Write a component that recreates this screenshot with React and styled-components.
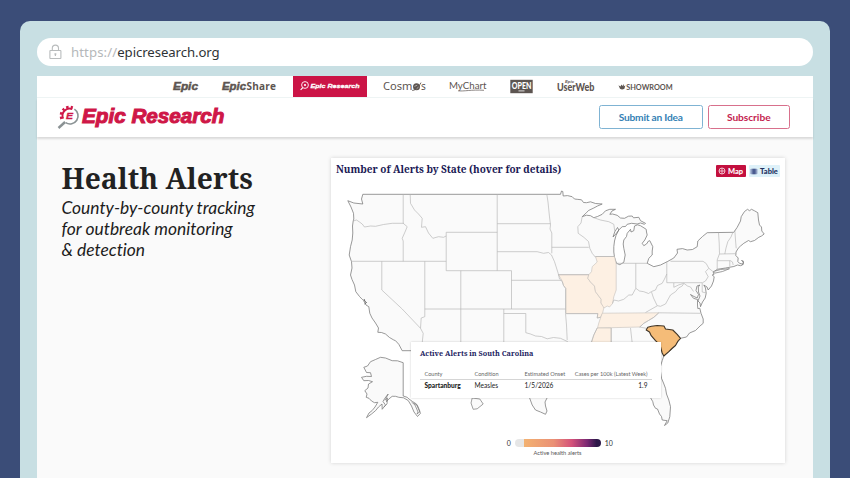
import React from 'react';
import styled, { createGlobalStyle } from 'styled-components';

const GlobalStyle = createGlobalStyle`
  * {
    box-sizing: border-box;
  }
  body {
    margin: 0;
    overflow: hidden;
    background: #3b4d78;
    font-family: Lato, sans-serif;
    font-variant-ligatures: none;
  }
`;

const Backdrop = styled.div`
  height: 478px;
  padding: 21px 20.5px 0 20px;
  background: #3b4d78;
`;

const BrowserWindow = styled.div`
  height: 457px;
  padding: 17px 16.5px 0 16.5px;
  background: #c8dfe3;
  border-radius: 10px 10px 0 0;
`;

const AddressBar = styled.div`
  display: flex;
  align-items: center;
  height: 27.5px;
  padding-left: 12px;
  margin-bottom: 10.5px;
  background: white;
  border-radius: 14px;
  svg {
    margin-right: 9.5px;
  }
`;

const Url = styled.div`
  font-family: 'Noto Sans', sans-serif;
  font-size: 13.2px;
  letter-spacing: ${({ spacing }) => spacing};
  color: ${({ color }) => color};
`;

const Page = styled.div`
  height: 402px;
  background: #fafafa;
`;

const SiteNav = styled.nav`
  display: flex;
  align-items: center;
  height: 21.5px;
  padding-left: 136px;
  background: white;
  border-bottom: 1px solid #eef4f4;
`;

const NavLogo = styled.a`
  display: flex;
  align-items: center;
  justify-content: center;
  height: 21px;
  width: ${({ width }) => width}px;
  margin-right: ${({ gap }) => gap}px;
  background: ${({ active }) => (active ? '#cb1446' : 'transparent')};
  svg {
    display: block;
    overflow: visible;
  }
`;

const Header = styled.header`
  display: flex;
  align-items: center;
  justify-content: space-between;
  height: 39px;
  padding: 0 23px 0 20px;
  background: white;
  box-shadow: 0 2px 2px rgba(0, 0, 0, 0.13);
`;

const Buttons = styled.div`
  display: flex;
  gap: 5px;
`;

const OutlineButton = styled.button`
  width: ${({ width }) => width}px;
  height: 24.5px;
  padding: 0;
  background: white;
  border: 1px solid ${({ border }) => border};
  border-radius: 2.5px;
  color: ${({ color }) => color};
  font-family: Lato, sans-serif;
  font-weight: 700;
  font-size: 10.2px;
  letter-spacing: ${({ spacing }) => spacing};
`;

const Content = styled.main`
  display: flex;
  justify-content: space-between;
  padding: 21.5px 28px 0 25px;
`;

const Intro = styled.div`
  padding-top: 2px;
`;

const Title = styled.h1`
  margin: 0;
  font-family: 'Noto Serif', 'DejaVu Serif', serif;
  font-weight: 700;
  font-size: 28.2px;
  line-height: 36px;
  letter-spacing: 0.07px;
  color: #222;
  white-space: nowrap;
`;

const Subtitle = styled.p`
  margin: 0.5px 0 0;
  font-style: italic;
  font-size: 17.4px;
  line-height: 21.3px;
  color: #1c1c1c;
  white-space: nowrap;
`;

const Card = styled.section`
  position: relative;
  width: 454.5px;
  height: 305px;
  background: white;
  box-shadow: 0 0 4px rgba(0, 0, 0, 0.16);
`;

const CardHeader = styled.div`
  display: flex;
  align-items: center;
  justify-content: space-between;
  height: 22px;
  padding: 0 5.5px 0 5.5px;
`;

const CardTitle = styled.h2`
  margin: 0;
  font-family: 'Noto Serif', 'DejaVu Serif', serif;
  font-weight: 700;
  font-size: 10px;
  letter-spacing: -0.02px;
  color: #1b1a55;
  white-space: nowrap;
`;

const Toggle = styled.div`
  display: flex;
  gap: 3px;
  padding-top: 4px;
`;

const ToggleItem = styled.div`
  display: flex;
  align-items: center;
  justify-content: center;
  gap: 2px;
  width: ${({ width }) => width}px;
  height: 12px;
  border-radius: 1px;
  background: ${({ active }) => (active ? '#c3103f' : '#def1f9')};
  color: ${({ active }) => (active ? 'white' : '#22305f')};
  font-size: 7.5px;
  font-weight: 900;
`;

const MapArea = styled.div`
  height: 259px;
  svg {
    display: block;
  }
`;

const Tooltip = styled.div`
  position: absolute;
  left: 80.5px;
  top: 184px;
  width: 250px;
  height: 56px;
  padding: 5.5px 9px 0;
  background: white;
  box-shadow: 0 0 2px rgba(0, 0, 0, 0.2);
`;

const TooltipTitle = styled.div`
  font-family: 'Noto Serif', 'DejaVu Serif', serif;
  font-weight: 700;
  font-size: 7.25px;
  line-height: 10px;
  color: #23235f;
`;

const TooltipRow = styled.div`
  display: grid;
  grid-template-columns: 50px 50px 50px 1fr;
  align-items: center;
  height: 11.5px;
  padding: 0 4.5px;
  font-size: ${({ $head }) => ($head ? '5.6px' : '6.6px')};
  color: ${({ $head }) => ($head ? '#666' : '#222')};
  margin-top: ${({ $head }) => ($head ? '10.5px' : '0')};
  border-bottom: ${({ $head }) => ($head ? '1px solid #d5d5d5' : 'none')};
  white-space: nowrap;
  span:first-child {
    font-weight: ${({ $head }) => ($head ? 400 : 900)};
  }
  span:last-child {
    text-align: right;
  }
`;

const Legend = styled.div`
  display: flex;
  flex-direction: column;
  align-items: center;
  width: 454px;
`;

const LegendScale = styled.div`
  display: flex;
  align-items: center;
  gap: 4px;
  height: 8px;
  padding-left: 4.5px;
  font-size: 7px;
  color: #333;
`;

const LegendBar = styled.div`
  width: 86px;
  height: 8px;
  border-radius: 4px;
  background: linear-gradient(
    90deg,
    #e6e6e6 0 9px,
    #f3b271 9px,
    #ea9075 45%,
    #d4517a 66%,
    #7b2873 84%,
    #2c1748 95%
  );
`;

const LegendLabel = styled.div`
  margin-top: 1.5px;
  font-size: 5.7px;
  color: #555;
`;

const LOGO_FONT = { fontFamily: 'Liberation Sans', fontWeight: 700, fontStyle: 'italic' };

const LockIcon = () => (
  <svg width="13" height="16" viewBox="0 0 13 16" fill="none" stroke="#b9bcbd" strokeWidth="1.1">
    <path d="M3.3 6.5V4.2a3.1 3.1 0 0 1 6.2 0v2.3" />
    <rect x="0.9" y="6.5" width="11" height="8" rx="0.6" />
    <path d="M6.4 9.3v2.8M5.3 10h2.2" strokeWidth="1.2" />
  </svg>
);

const BrandLogo = () => (
  <svg width="170" height="28" viewBox="56.5 103 170 28">
    <path d="M73.9 109.2A8 8 0 0 1 65.2 122.7" fill="none" stroke="#8a9294" strokeWidth="1.6" />
    <path d="M64.6 122L58 128" stroke="#8a9294" strokeWidth="2.4" />
    <path d="M62.7 118.6A7 7 0 0 1 71.8 109.2" fill="none" stroke="#cf1747" strokeWidth="1.9" />
    <path
      d="M61 119A8.7 8.7 0 0 1 72.3 107.6"
      fill="none"
      stroke="#cf1747"
      strokeWidth="2.4"
      strokeDasharray="2.4 2.1"
    />
    <text x="65.6" y="118.8" fontSize="8.6" textLength="7" lengthAdjust="spacingAndGlyphs" fill="#cf1747" stroke="#cf1747" strokeWidth="0.3" {...LOGO_FONT}>
      E
    </text>
    <text
      x="81.5"
      y="123.4"
      fontSize="19.5"
      textLength="142.5"
      lengthAdjust="spacingAndGlyphs"
      fill="#cf1747"
      stroke="#cf1747"
      strokeWidth="1"
      {...LOGO_FONT}
    >
      Epic Research
    </text>
  </svg>
);

const EpicLogo = () => (
  <svg width="25" height="14">
    <text x="0" y="10.5" fontSize="10" textLength="25" lengthAdjust="spacingAndGlyphs" fill="#5d5551" stroke="#5d5551" strokeWidth="0.45" {...LOGO_FONT}>Epic</text>
  </svg>
);

const EpicShareLogo = () => (
  <svg width="54" height="14">
    <text x="0" y="10.5" fontSize="10" textLength="24" lengthAdjust="spacingAndGlyphs" fill="#5d5551" stroke="#5d5551" strokeWidth="0.45" {...LOGO_FONT}>Epic</text>
    <text x="24.5" y="10.8" fontSize="10" textLength="29.5" fontFamily="Open Sans" fontWeight="700" fill="#5d5551">Share</text>
  </svg>
);

const ResearchLogo = () => (
  <svg width="60" height="14">
    <circle cx="5" cy="6" r="3.4" fill="none" stroke="white" strokeWidth="0.9" />
    <circle cx="5" cy="6" r="1.1" fill="white" />
    <path d="M2.8 8.6L0.6 10.8" stroke="white" strokeWidth="1.2" />
    <text x="10.5" y="9" fontSize="6.2" textLength="49" lengthAdjust="spacingAndGlyphs" fill="white" stroke="white" strokeWidth="0.3" {...LOGO_FONT}>Epic Research</text>
  </svg>
);

const CosmosLogo = () => (
  <svg width="43" height="14">
    <text x="0" y="10.8" fontSize="11.2" textLength="29.5" lengthAdjust="spacingAndGlyphs" fontFamily="Noto Sans" fill="#5d5551">Cosm</text>
    <circle cx="33.5" cy="7.8" r="3.5" fill="#5d5551" />
    <path d="M29.2 11.4c2.5.2 6.2-2.6 8.8-7.8" fill="none" stroke="#5d5551" strokeWidth="0.9" />
    <path d="M31.4 7.4l2.8-1.2M33.6 9.8l2-1.8" stroke="white" strokeWidth="0.5" />
    <text x="38" y="10.8" fontSize="11.2" textLength="4.8" lengthAdjust="spacingAndGlyphs" fontFamily="Noto Sans" fill="#5d5551">s</text>
  </svg>
);

const MyChartLogo = () => (
  <svg width="38" height="14">
    <text x="0" y="9.8" fontSize="10" textLength="37.5" lengthAdjust="spacingAndGlyphs" fontFamily="Lato" fill="#5d5551">MyChart</text>
    <path d="M9 11.8c6 0.8 13-1.4 26-0.5" fill="none" stroke="#5d5551" strokeWidth="0.7" />
  </svg>
);

const OpenLogo = () => (
  <svg width="23" height="14">
    <rect x="0.3" y="0.8" width="22.4" height="13.4" fill="#5d5551" />
    <text x="1.8" y="9.6" fontSize="9.4" textLength="19.6" lengthAdjust="spacingAndGlyphs" fontFamily="Lato" fontWeight="900" fill="white">OPEN</text>
    <path d="M8.5 11.9h6" stroke="#ddd" strokeWidth="1" />
  </svg>
);

const UserWebLogo = () => (
  <svg width="38" height="14">
    <text x="8" y="4" fontSize="4" textLength="9" lengthAdjust="spacingAndGlyphs" fill="#5d5551" {...LOGO_FONT}>Epic</text>
    <text x="0" y="12.4" fontSize="10.4" textLength="37.5" lengthAdjust="spacingAndGlyphs" fontFamily="Lato" fontWeight="900" fill="#5d5551">UserWeb</text>
  </svg>
);

const ShowroomLogo = () => (
  <svg width="55" height="14">
    <path d="M0.5 6.2l2 1.4 0.9-2.2 1 1.6 1.4-2v2.4l1.6-1.2-1 3.6q-2.4 1.6-4.4 0z" fill="#5d5551" />
    <text x="8.2" y="10.7" fontSize="7" textLength="46.5" lengthAdjust="spacingAndGlyphs" fontFamily="Lato" fontWeight="700" fill="#5d5551">SHOWROOM</text>
  </svg>
);

const GlobeIcon = () => (
  <svg width="8" height="8" viewBox="0 0 8 8" fill="none" stroke="#f8dfe6" strokeWidth="0.8">
    <circle cx="4" cy="4" r="3" />
    <path d="M1 4h6M4 1v6" />
  </svg>
);

const TableIcon = () => (
  <svg width="8" height="7" viewBox="0 0 8 7">
    <rect x="0.4" y="0.8" width="7" height="5.4" rx="0.8" fill="#8c9cc0" />
    <rect x="2.4" y="0.8" width="3.2" height="5.4" fill="#4a5b90" />
  </svg>
);

const COAST =
  'M362.3 194.3H560L561 191L562.3 191.5L562.7 196L567 195.6L571.7 196.7L574 199L576.7 199.3L581 199.8L583 202.5L586 202.7L590 201.8L595 203.5L601.7 204L597 206L593.3 208L588 210.5L586 212.7L581.7 216.7L586 215.2L590 215.7L593.3 217.7L597 216.5L601.7 214.3L605 210.8L609.3 209.3L615 209.3L611.5 211L609.3 214.3L612 214L616.7 215.3L620 218L624 218.3L628 216.2L631.7 216L633 217.8L638.3 217.3L640 220.7L645 223.3L644 224.3L640 223L636.7 224L631 223.3L626.7 224.3L625 226.5L621.7 226.7L618.3 230L617 227.5L614.3 231.7L612.5 237L615.3 234L618.3 230L615.5 235.5L614 241L613.3 246.7L613.3 252L614 257.3L616 263.3L619.3 264.7L623.3 262.3L624.7 255L623.3 248.3L622.7 244L623.3 240L626 236.5L626.7 233.3L630 229.3L630.5 232L633.3 230.7L634 226L637 224.8L640 225.7L645.7 229.3L646 232L646.7 235L644.3 240L641.7 243.3L643.3 245.7L646 244L648 241L649.3 240.7L652.3 246.7L651.7 251L651.7 255L648.3 258.3L646.7 263.3L653.3 266.7L660 265L666.7 261.7L673.3 258L677 253L676.5 249.3L682 248.6L686.7 250L692 249.5L696.7 246.7L697.3 241L702 236.5L706.7 232.7L733.3 232.3L736.7 227.3L740 221L740.7 216.7L744 211.5L747 209.3L749 210.7L751 209.3L754 210.8L757.3 212.7L758 220L759 225L761 227L761.3 231L763.7 234L761 236L758.3 237.3L754 240.5L750 241.7L748 240.5L743.3 243.3L740 246L737.7 248.3L735.5 252L735.3 255.5L737.7 258L737.3 261.5L739 263.3L742.7 264.3L742.8 261L741 260.5L743 262.2L742 265L740 265.7L737 265L733.3 266.5L725 268L716.7 269.3L712.7 272.3L713.5 274.5L711.7 275L713.7 276.7L713 281L711 286L707.7 290L706.5 287L703.3 285L705 288L705.7 293.3L704.7 298L702 302L700 306.7L699.5 303L697.5 301L699.5 296L698 292L697.8 287L699.3 285L696.5 286L695.5 290.5L698 294.5L696.7 298L693.5 296.5L690 294.5L693 298.3L697 299.5L697 305L697.3 308.5L699.3 308.3L700.5 313.3L702.7 319L702.7 323.3L699.5 326L695 330.5L689 333L686 337L680 338.3L675 345L668.3 351.7L663.3 356L661.7 360.7L659.5 368L661 378.3L663 383L665 388.3L666 394L668.3 400L670 406.7L669.3 416.7L667.3 423L664 425.5L666.7 420.7L661.7 420L661 416.5L659 414L657 409L655 408.3L653 405L652.3 401.7L650 397.7L640 385L610 388L580 390L552 394L546.7 397.7L544.5 402L545 406L546.5 411L545 414.3L540 412L535 410L531.7 405L529 397.7L515 382L505 385L490 370L460 362L424 355L411 350.7H401.7L398.3 344.3L395 340.7L393.3 340L389 337.5L385 334L381 332.5L377.3 332.3L378 328L375 323L371.5 318L369.3 313.3L368.3 306.7L365.5 305L363 300.5L361.7 299.3L359 296.5L355.3 291.7L354 285L351.5 279.5L350 275L351.5 268L351 261.7L348.7 255L349.5 250L350 246.7L351.7 240L352.3 233L352 226L352.7 221L353.3 219L353 213.3L350.5 207L347.3 200.7L353.3 203L362.3 204L361 199Z';

const ALASKA =
  'M380 357.3L385 358L391.7 360.7L397 360.8L402.7 362.7V396L406.7 397.3L408.5 399L412 401.5L416 404L418 409L420 413.3L417 416.5L413.5 412L411 406L407.7 400.5L403 397.8L398.3 397.3L395 396.3L391.7 396.3L388.3 399L386 401.7L385.5 398L387.7 394L384.3 398.3L382.5 401.5L385 405L381.7 409.3L381.5 404L378 407L375 410.7L371 414L366 417.7L368.5 413L371.7 410.5L374.5 407L377.3 402.3L374 402.7L371 401L368.5 398.3L365.7 397.3L366.5 394L364.3 390.7L367.5 388L368 384L372 381.7L368 380.5L363.3 380.7L361 377.3L366 376.3L371 376.5L370 372.7L366 372.5L363.3 367.3L367 366L370 361.7L375 359.5Z';

const STATE_LINES = [
  // west
  'M352.7 221L356 220L359 222L361.7 224L364 227L370 226L375 226.3L383 224.5L391.7 223.3H403.3',
  'M402.7 194.3V223.3L406.7 226.7L404.5 232L401.7 238.3L402.7 241V261.3',
  'M351 261.3H445.7',
  'M409.7 194.3L410 203.3L414 210L418 214L421.7 218.3L421 227.3L425 226.7L428 233L432.3 238.3L438 236.7L443 237.3L445.7 236',
  'M496.7 194.3V270.7M445.7 232.3H496.7M445.7 232.3V270.7H511V309M460.3 270.7V343M424.3 309H565',
  'M381.3 261.3V290L401.7 309L420 328.3L422.7 333.3L421.7 343M424.3 261.3V316.7L420.7 318L420 328.3',
  // plains
  'M496.7 223.7H550M546.3 194.3L547.5 202L548.3 210L549 217L550 225L549.5 229L551.3 233V253.3',
  'M496.7 251.7H536.7L543 253.3L548 252.5L551 255L554 261.7L556 268L557.7 273.3L559 279L561.7 281.5L563 285.5L565 288.3V313.3L566 325L566.7 340',
  'M511 280.3H561M551.3 247.3H588.3M557.7 274.7H588.3',
  'M503.3 309V343M503.3 313.5H525.3V332.7L530 334L535 336L541 336.5L546.7 338.8L553 337.5L560 338.3L567.3 341.7',
  // upper midwest
  'M581.7 216.7L580.5 223L577.3 226.7L577.7 233.3L583.3 237.3L588 241.5L589.3 248.3L591.7 253.3L595 257.3',
  'M593.3 217.7L600 220L608.3 221.7L613.3 224.3L614.3 231.7M595 256.5H614M615.7 263.3H647M635.3 263.3V288.3',
  'M612 303.5L613.3 300L618 301L623.3 299.3L628.3 295L631.7 295L635.3 288.3L639 291L643.3 291.7L648 293.5L651 291.5L655 290L657 285.5L661.7 283.3L664 279L666.3 274V261.7',
  'M565.7 313.6H597.3L596.7 318L600 317.3',
  // south
  'M658.3 312.8L699.7 313.3M610.7 328V343M630 328L631.7 343M590.7 343L593.3 335L596.7 328M639 327L647 328.5',
  'M658.3 312.8L653.3 317.3L648 320.5L643.3 323.3L639.3 327M645 312.5L657 305.7L660 306.3L665 304L670 295L675 291.7L678 288L681.7 286L683.3 283.5',
  'M651 292L653 298L656.7 305.7',
  // northeast
  'M670 261.3H702.5L705.7 263.5L708.3 268.3L705 271.7L707.7 276.7L705 281L702 282.7M666.3 274V282.7H701.7V292L705.7 293',
  'M708.3 268.3L712.7 271.7M673.3 283V287.3L678 285L683.3 283.3L687 286L690 287L693 291.5',
  'M718 232.7L718.7 243L719 253.7L716.7 260L716.7 269M732.3 232.5L730.5 237L727.3 241.7L725.5 248L724.3 254M734.3 230L735 240L735.7 248.3',
  'M719 254L735 253.7M717 260.7H730L732 262L732.7 265M729.3 260.7V266.5',
];

const PALE_STATES = [
  // Missouri
  'M558 274.7H588.3L587.3 278.3L590 282L594 286L595 291.7L600.7 299.3L600.5 303L603.5 307L602 313.5L600 317.3L596.7 318L597.3 313.6H565.5V288.5L563 285.5L561.7 281Z',
  // Illinois
  'M595 256.5H614L615.7 264V290L613.3 296.7L612 303.5L609 307L606.7 306L603.5 308L600.5 303L600.7 299.3L595 291.7L594 286L590 282L587.3 278.3L588.3 274.7L591 271.7L591.7 266.7L596.7 262Z',
  // Tennessee
  'M601.7 313.2L658.3 312.8L653.3 317.3L648 320.5L643.3 323.3L639.3 327L597 328L598.3 323L600 318Z',
  // Mississippi
  'M596.7 328H610.7V343H590.7L593.3 335Z',
];

const UsMap = () => (
  <svg width="454" height="256" viewBox="330.5 180 454 256" strokeLinejoin="round">
    <path d={COAST} fill="#fafafa" stroke="#777" strokeWidth="0.75" />
    <path d={ALASKA} fill="#fafafa" stroke="#777" strokeWidth="0.75" />
    <path d="M411 402L414.5 405L417.5 412L416.5 414L419.5 411.5L417 405.5L413 403M384 400L387 398L386.5 404L383.5 407" fill="none" stroke="#777" strokeWidth="0.7" />
    <path d="M471.7 398L470.5 403L472.7 409.3L476.7 408.8L482.7 404L479.3 399Z" fill="#fafafa" stroke="#777" strokeWidth="0.7" />
    <path d="M713 271.5L720 269.5L729 268.7L722 271.5L714 273.2Z" fill="#fafafa" stroke="#777" strokeWidth="0.7" />
    <path d="M363.5 299L364.5 301.5L366 302.5L364 304" fill="none" stroke="#555" strokeWidth="0.9" />
    {PALE_STATES.map((d) => (
      <path key={d} d={d} fill="#fdf0e3" stroke="#c4c0bb" strokeWidth="0.6" />
    ))}
    {STATE_LINES.map((d) => (
      <path key={d} d={d} fill="none" stroke="#b4b4b4" strokeWidth="0.65" />
    ))}
    <path
      d="M645.7 330L647.3 327.3L651 326.3L656.7 325.5L663.5 326L665 329L672.3 330L676.7 334.3L680 338.3L677.5 341L675 345.5L671.5 348.5L668.3 351.7L663.3 356L661.7 353L659.5 345L655 340.7L650.7 335.7L649 332Z"
      fill="#f5bc78"
      stroke="#3f3528"
      strokeWidth="1.1"
    />
  </svg>
);

const App = () => {
  return (
    <Backdrop>
      <GlobalStyle />
      <BrowserWindow>
        <AddressBar>
          <LockIcon />
          <Url color="#b5b8ba" spacing="0.1px">https://</Url>
          <Url color="#2f3336" spacing="-0.08px">epicresearch.org</Url>
        </AddressBar>
        <Page>
          <SiteNav>
            <NavLogo width={26} gap={23.5}><EpicLogo /></NavLogo>
            <NavLogo width={54} gap={16.5}><EpicShareLogo /></NavLogo>
            <NavLogo width={74} gap={16.5} active><ResearchLogo /></NavLogo>
            <NavLogo width={43} gap={22.5}><CosmosLogo /></NavLogo>
            <NavLogo width={38} gap={23}><MyChartLogo /></NavLogo>
            <NavLogo width={23} gap={24}><OpenLogo /></NavLogo>
            <NavLogo width={38} gap={23}><UserWebLogo /></NavLogo>
            <NavLogo width={55} gap={0}><ShowroomLogo /></NavLogo>
          </SiteNav>
          <Header>
            <BrandLogo />
            <Buttons>
              <OutlineButton width={103.5} color="#3581b5" border="#7fb3d3" spacing="-0.22px">Submit an Idea</OutlineButton>
              <OutlineButton width={82.5} color="#c42350" border="#d8708c" spacing="-0.05px">Subscribe</OutlineButton>
            </Buttons>
          </Header>
          <Content>
            <Intro>
              <Title>Health Alerts</Title>
              <Subtitle>
                County-by-county tracking<br />
                for outbreak monitoring<br />
                &amp; detection
              </Subtitle>
            </Intro>
            <Card>
              <CardHeader>
                <CardTitle>Number of Alerts by State (hover for details)</CardTitle>
                <Toggle>
                  <ToggleItem width={30} active><GlobeIcon />Map</ToggleItem>
                  <ToggleItem width={31}><TableIcon />Table</ToggleItem>
                </Toggle>
              </CardHeader>
              <MapArea>
                <UsMap />
              </MapArea>
              <Legend>
                <LegendScale>
                  0
                  <LegendBar />
                  10
                </LegendScale>
                <LegendLabel>Active health alerts</LegendLabel>
              </Legend>
              <Tooltip>
                <TooltipTitle>Active Alerts in South Carolina</TooltipTitle>
                <TooltipRow $head>
                  <span>County</span>
                  <span>Condition</span>
                  <span>Estimated Onset</span>
                  <span>Cases per 100k (Latest Week)</span>
                </TooltipRow>
                <TooltipRow>
                  <span>Spartanburg</span>
                  <span>Measles</span>
                  <span>1/5/2026</span>
                  <span>1.9</span>
                </TooltipRow>
              </Tooltip>
            </Card>
          </Content>
        </Page>
      </BrowserWindow>
    </Backdrop>
  );
};

export default App;
